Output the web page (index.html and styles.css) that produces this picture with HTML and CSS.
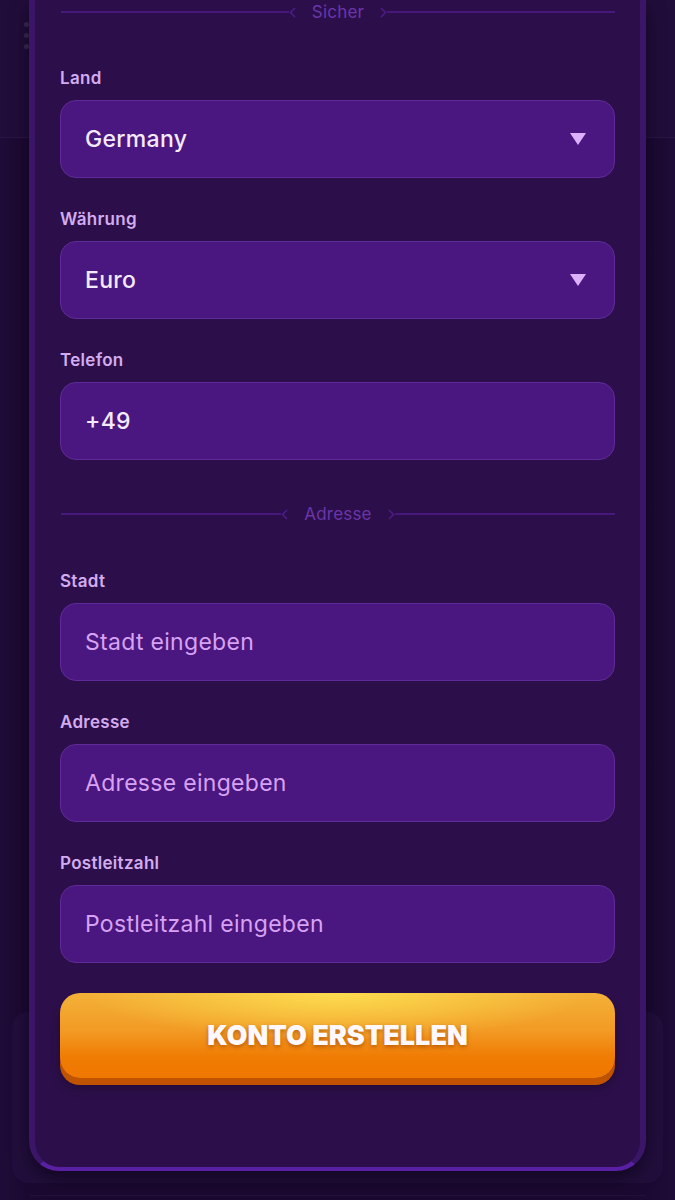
FILE: index.html
```html
<!DOCTYPE html>
<html lang="de">
<head>
<meta charset="utf-8">
<title>Konto erstellen</title>
<link rel="stylesheet" href="styles.css">
</head>
<body>
<div class="page">
  <header class="topbar">
    <div class="kebab"><span></span><span></span><span></span></div>
  </header>
  <div class="spacer"></div>
  <div class="bg-card"></div>
  <div class="footer-line"></div>

  <div class="modal">
    <div class="divider">
      <span class="line"></span>
      <svg class="chev" width="7" height="11" viewBox="0 0 7 11"><path d="M6 1L1.5 5.5L6 10" fill="none" stroke="#4e1c8a" stroke-width="1.5"/></svg>
      <span class="divider-text">Sicher</span>
      <svg class="chev" width="7" height="11" viewBox="0 0 7 11"><path d="M1 1L5.5 5.5L1 10" fill="none" stroke="#4e1c8a" stroke-width="1.5"/></svg>
      <span class="line"></span>
    </div>

    <div class="fields fields-top">
      <div class="field">
        <label class="label">Land</label>
        <div class="control select"><span class="value">Germany</span><span class="caret"></span></div>
      </div>
      <div class="field">
        <label class="label">Währung</label>
        <div class="control select"><span class="value">Euro</span><span class="caret"></span></div>
      </div>
      <div class="field">
        <label class="label">Telefon</label>
        <div class="control"><span class="value">+49</span></div>
      </div>
    </div>

    <div class="divider divider-mid">
      <span class="line"></span>
      <svg class="chev" width="7" height="11" viewBox="0 0 7 11"><path d="M6 1L1.5 5.5L6 10" fill="none" stroke="#4e1c8a" stroke-width="1.5"/></svg>
      <span class="divider-text">Adresse</span>
      <svg class="chev" width="7" height="11" viewBox="0 0 7 11"><path d="M1 1L5.5 5.5L1 10" fill="none" stroke="#4e1c8a" stroke-width="1.5"/></svg>
      <span class="line"></span>
    </div>

    <div class="fields">
      <div class="field">
        <label class="label">Stadt</label>
        <div class="control"><span class="placeholder">Stadt eingeben</span></div>
      </div>
      <div class="field">
        <label class="label">Adresse</label>
        <div class="control"><span class="placeholder">Adresse eingeben</span></div>
      </div>
      <div class="field">
        <label class="label">Postleitzahl</label>
        <div class="control"><span class="placeholder">Postleitzahl eingeben</span></div>
      </div>
    </div>

    <button class="btn">KONTO ERSTELLEN</button>
  </div>
</div>
</body>
</html>
```
FILE: styles.css
```css
* { box-sizing: border-box; }
html, body { margin: 0; padding: 0; }
body {
  background: #1c0a32;
  font-family: Inter, "Noto Sans", sans-serif;
  width: 675px;
  height: 1200px;
  overflow: hidden;
}
.page {
  position: relative;
  width: 675px;
  height: 1200px;
  display: flex;
  flex-direction: column;
  background: linear-gradient(90deg, #1f0b37 0%, #1c0932 4%, #1c0932 96%, #1f0b37 100%);
}
.topbar {
  height: 138px;
  border-bottom: 1px solid #2b1545;
  background: #210d3a;
  padding: 22px 0 0 24px;
  flex-shrink: 0;
}
.kebab { display: flex; flex-direction: column; gap: 6px; }
.kebab span { width: 5px; height: 5px; border-radius: 50%; background: #3b2a52; }
.spacer { height: 874px; flex-shrink: 0; }
.bg-card {
  margin: 0 12px;
  height: 171px;
  border-radius: 16px;
  background: #220e3c;
  flex-shrink: 0;
}
.footer-line {
  margin: 12px 30px 0;
  border-top: 1px solid #22123a;
}

.modal {
  position: absolute;
  left: 29px;
  top: 0;
  width: 617px;
  height: 1171px;
  background: #2c0f4a;
  border-style: solid;
  border-width: 0 6px 4px 6px;
  border-color: #3a1568 #3a1568 #5a20a3 #3a1568;
  border-radius: 0 0 30px 30px;
  padding: 2px 25px 0 25px;
  box-shadow: 0 8px 18px rgba(5, 0, 15, 0.55);
  display: flex;
  flex-direction: column;
}

.divider {
  display: flex;
  align-items: center;
  height: 20px;
  padding-left: 1px;
}
.divider .line { flex: 1; height: 2px; background: #47187c; }
.divider .chev { flex-shrink: 0; }
.divider-text {
  color: #6a36a9;
  font-size: 17px;
  margin: 0 16px;
  line-height: 20px;
  letter-spacing: 0.2px;
}
.divider-mid { margin: 44px 0 46px; }

.fields { display: flex; flex-direction: column; gap: 30px; }
.fields-top { margin-top: 45px; }
.field { display: flex; flex-direction: column; }
.label {
  color: #d3acf0;
  font-size: 17px;
  font-weight: 600;
  letter-spacing: 0.3px;
  line-height: 22px;
  margin-bottom: 11px;
}
.control {
  height: 78px;
  border-radius: 16px;
  background: #4a167f;
  border: 1px solid #5f2b98;
  display: flex;
  align-items: center;
  padding: 0 28px 0 24px;
  font-size: 23px;
  font-weight: 500;
  letter-spacing: 0.3px;
}
.value { color: #f4eaff; flex: 1; }
.placeholder { color: #d8a2f4; flex: 1; font-weight: 400; }
.caret {
  width: 0; height: 0;
  border-left: 8px solid transparent;
  border-right: 8px solid transparent;
  border-top: 12px solid #dcb0fd;
}

.btn {
  margin-top: 30px;
  height: 85px;
  border: none;
  border-radius: 20px;
  background:
    radial-gradient(ellipse 45% 55% at 50% 0%, rgba(253, 222, 80, 0.95), rgba(253, 222, 80, 0) 100%),
    linear-gradient(180deg, #f3b138 0%, #f29a24 45%, #f07c04 75%, #ef7700 100%);
  box-shadow: 0 7px 0 #c05300, 0 10px 10px rgba(10, 0, 20, 0.3);
  color: #fff8fc;
  font-family: Inter, "Noto Sans", sans-serif;
  font-size: 27px;
  font-weight: 900;
  letter-spacing: 0;
  text-shadow: 0 2px 4px rgba(150, 60, 0, 0.6);
  padding: 0;
  cursor: pointer;
}
```
